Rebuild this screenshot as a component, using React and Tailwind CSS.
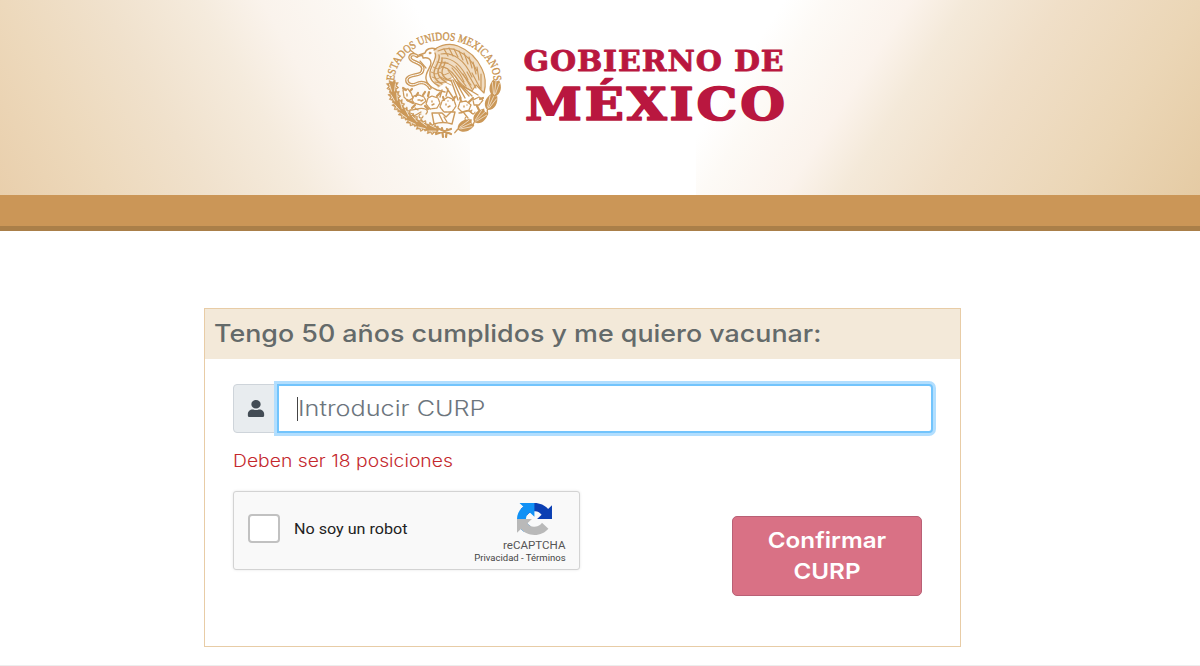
import { useState } from 'react';
import { FaUser } from 'react-icons/fa';

// leaves of the lower half of the wreath, angle in degrees (0 = right, 90 = bottom)
const OAK = [103, 115, 127, 139, 151, 163, 175];
const LAUREL = [7, 25, 46, 66];

const onWreath = (deg) => {
  const a = (deg * Math.PI) / 180;
  return `translate(${68 + 51.5 * Math.cos(a)} ${61 + 47 * Math.sin(a)})`;
};

const Emblem = () => (
  <svg className="h-[124px] w-[136px]" viewBox="0 0 136 124" fill="none" stroke="#cc9a5c" strokeLinecap="round" strokeLinejoin="round">
    <path id="motto" d="M18 61 A50 43 0 0 1 118 61" stroke="none" />
    <text fill="#c8934f" stroke="#c8934f" strokeWidth="0.35" fontSize="11.5" fontFamily="Liberation Serif, serif">
      <textPath href="#motto" startOffset="2" textLength="142" lengthAdjust="spacingAndGlyphs">ESTADOS UNIDOS MEXICANOS</textPath>
    </text>

    {/* eagle: wing */}
    <path d="M58 28c7-6 17-7 24-4 10 4 19 12 24 23 4 8 4 16 2 24l-8-8-4 6c-7-3-13-8-17-15L62 66l-8-14 6-14z" fill="#f0dcc2" stroke="none" />
    <g strokeWidth="1.2">
      <path d="M58 28c7-6 17-7 24-4 10 4 19 12 24 23 4 8 4 16 2 24l-8-8-4 6c-7-3-13-8-17-15" />
      <path d="M62 29c7-3 14-3 20 0 9 4 15 11 19 20M65 32c12-2 24 6 31 23M66 36c11 0 20 8 26 22M66 40c9 1 17 8 22 20M65 44c8 2 14 8 19 18" />
      <path d="M83 29l4 9M88 31l4 11M93 35l3 11M97 40l3 12M101 45l2 13M105 52l0 15M96 51l8 15M91 50l9 16M87 52l9 15M78 27l4 8M73 26l4 8M68 27l4 7" />
      <path d="M80 44l15 19M76 46l14 18M72 48l12 17" />
    </g>
    {/* eagle: head, breast and tail */}
    <g strokeWidth="1.4">
      <path d="M60 27c-5-2-10 0-11 4l-6 2c3 0 4 1 4 3 5-1 8 1 8 5 0 5-6 9-5 16 1 6 6 9 11 11l8 2" />
      <path d="M59 31c3 5-4 12-5 19s4 12 9 14M63 33c2 6-5 12-5 18s4 9 8 11M66 36c1 6-5 10-4 15s5 7 8 9M69 40c0 4-4 7-3 11s5 7 9 8" />
      <path d="M55 50l5 2 4-2 4 3 5-2M56 55l5 2 4-2 5 3 5-2M59 60l5 1 5-1 6 3M57 45l5 2 5-2 5 2M61 40l5 1 6 0" strokeWidth="0.9" />
      <path d="M75 58l7 20M79 58l10 18M83 61l13 13M87 64l15 9M77 58l8 18M81 60l12 14M70 65l8 12M66 68l-2 7M72 67l-2 7" />
    </g>
    <circle cx="54" cy="31" r="0.9" fill="#c8934f" />
    {/* snake */}
    <path d="M41 34c-6-4-10 2-4 5 7 3 12 5 9 11-2 4-13 2-15 7-1 5 5 7 9 5 6-3 11-1 14 4" strokeWidth="3.6" />
    <path d="M41 34c-6-4-10 2-4 5 7 3 12 5 9 11-2 4-13 2-15 7-1 5 5 7 9 5 6-3 11-1 14 4" stroke="#fff" strokeWidth="1" />
    <path d="M38 31l-4-3M47 33l-6 2M50 46l-6-7" strokeWidth="1.2" />

    {/* cactus */}
    <g strokeWidth="1.3" strokeDasharray="3 1" fill="#fffdfb">
      <path d="M27 68l5-1 3 4 2 5-5 3-4-4z" />
      <path d="M38 74l5-1 5 2 2 4-5 4-7-2-2-3z" />
      <path d="M52 76l4-2 6 2 2 5-3 5-7 1-4-5z" />
      <path d="M84 80l6-1 5 4-2 5-7 2-4-4z" />
      <path d="M97 78l6-3 4 3-4 5-5 0z" />
      <path d="M66 79l6-4 6 3 2 6-4 6-8 0-4-5z" />
    </g>
    <path d="M56 91h10l4 4 5-5h4l-3 12c-6-2-12-2-18 0z" strokeWidth="1.4" fill="#fffdfb" />
    <g strokeWidth="1.1">
      <path d="M27 66l3 2M36 67l-2 2M31 78l6 3M40 74l2-3M47 73l2-3M52 74l1-4M61 74l3-3M68 78l-1-3M77 78l2-3M85 79l-1-3M93 80l4-4M104 77l3-1M101 84l2 4M39 83l-3 3M49 84l3 3" strokeWidth="2.2" />
      <path d="M31 72v2M42 78h2M47 78l-2 1M56 79v1M58 82l-2 1M70 82v1M74 84l-2 1M72 79v0M88 84v1M91 83v0" strokeWidth="1.4" />
      <path d="M34 88c6 0 10-3 15-1 3 1 3 3 1 5M38 94l7-4M42 88l-3-2M37 92l-3-1M83 91c5 0 7-3 12-2M88 91l4 5M93 89l4 3M63 92l4 8M68 95l3 5" strokeWidth="1.3" />
      <path d="M96 88a2 2 0 1 0 3 2M90 95a2 2 0 1 0 3 2M45 92a2 2 0 1 0 2 2" />
    </g>

    {/* wreath: oak on the left, laurel on the right */}
    {OAK.map(deg => (
      <g key={deg} transform={`${onWreath(deg)} rotate(${deg + 90})`}>
        <path d="M-6-1L-5-4-3-3-1-6 1-4 4-6 4-3 7-3 5 0 7 3 4 3 4 6 1 4-1 6-3 3-5 4-6 1z" fill="#cb9858" strokeWidth="0.6" />
        <path d="M-4-1.5L3-3M-4 1.5l7 1.5M-1-4l1 1M-1 4l1-1" stroke="#fdf8f2" strokeWidth="0.7" />
      </g>
    ))}
    {LAUREL.map(deg => (
      <g key={deg} transform={`${onWreath(deg)} rotate(${deg - 90})`}>
        <path d="M-8 0C-5-7 3-7 9-3 7-1 7 1 9 3 3 7-5 7-8 0z" fill="#cb9858" stroke="none" />
        <path d="M-5-1L6-3.5M-5 1L6 3.5M-6 0h13" stroke="#fdf8f2" strokeWidth="0.6" />
        <path d="M-8 0l-4 2" strokeWidth="1.4" />
      </g>
    ))}
    <path d="M60 112l15-5M61 106l14 6M66 106l1 9M71 107l-1 8" strokeWidth="2.2" />
  </svg>
);

const GobiernoLogo = () => (
  <svg className="mt-[13px] h-[100px] w-[290px]" viewBox="510 35 290 100" fill="#b9173f" stroke="#b9173f" strokeLinejoin="round" fontFamily="DejaVu Serif, serif" fontWeight="700">
    <text x="523.5" y="70.5" fontSize="27.5" strokeWidth="0.8" letterSpacing="0.8" textLength="261" lengthAdjust="spacingAndGlyphs">GOBIERNO DE</text>
    <text x="525" y="119.5" fontSize="44" strokeWidth="1.7" letterSpacing="2.5" textLength="263" lengthAdjust="spacingAndGlyphs">MÉXICO</text>
  </svg>
);

const RecaptchaLogo = () => (
  <svg className="h-8 w-[35px]" viewBox="0 0 64 64" preserveAspectRatio="none">
    <path fill="#0b3fb3" d="M64 31.955l-.033-1.37V4.687l-7.16 7.16C50.948 4.674 42.033.093 32.05.093c-10.4 0-19.622 4.96-25.458 12.64l11.736 11.86a15.55 15.55 0 0 1 4.754-5.334c2.05-1.6 4.952-2.906 8.968-2.906.485 0 .86.057 1.135.163 4.976.393 9.288 3.14 11.828 7.124l-8.307 8.307L64 31.953" />
    <path fill="#1191f5" d="M31.862.094l-1.37.033H4.594l7.16 7.16C4.58 13.147 0 22.06 0 32.046c0 10.4 4.96 19.622 12.64 25.458L24.5 45.768a15.55 15.55 0 0 1-5.334-4.754c-1.6-2.05-2.906-4.952-2.906-8.968 0-.485.057-.86.163-1.135.393-4.976 3.14-9.288 7.124-11.828l8.307 8.307L31.86.095" />
    <path fill="#b9b9b9" d="M.001 32.045l.033 1.37v25.898l7.16-7.16c5.86 7.173 14.774 11.754 24.76 11.754 10.4 0 19.622-4.96 25.458-12.64l-11.736-11.86a15.55 15.55 0 0 1-4.754 5.334c-2.05 1.6-4.952 2.906-8.968 2.906-.485 0-.86-.057-1.135-.163-4.976-.393-9.288-3.14-11.828-7.124l8.307-8.307c-10.522.04-22.4.066-27.295-.005" />
  </svg>
);

export default function App() {
  const [curp, setCurp] = useState('');
  const [checked, setChecked] = useState(false);

  return (
    <div className="flex h-[666px] w-[1200px] flex-col overflow-hidden border-b border-[#ededed] bg-white font-['Inter',sans-serif]">
      <header className="flex h-[195px] shrink-0 bg-[linear-gradient(61deg,#e9cfac_0%,#edd9bc_19%,#f0e1cc_36%,#f5ebdd_53%,#faf3ec_64%,#fcf9f5_80%,#ffffff_90%),linear-gradient(123deg,#ffffff_14%,#fdfaf6_21%,#fbf3ec_34%,#f4e9d9_43%,#f0dfc8_58%,#ebd6b6_80%,#e5cba4_100%)] bg-[length:470px_195px,504px_195px] bg-[position:left_top,right_top] bg-no-repeat">
        <div className="flex items-start pl-[376px] pt-[22px]">
          <Emblem />
          <div className="-ml-0.5">
            <GobiernoLogo />
          </div>
        </div>
      </header>
      <div className="h-9 shrink-0 border-b-[5px] border-[#aa7f49] bg-[#cb9657]" />

      <main className="ml-[204px] mt-[77px] h-[339px] w-[757px] border border-[#e8cca6]">
        <div className="flex h-[50px] items-center bg-[#f3e9d9] pl-[9px]">
          <h1 className="origin-left scale-x-[1.118] whitespace-nowrap text-2xl font-medium text-[#646a6a]">
            Tengo 50 años cumplidos y me quiero vacunar:
          </h1>
        </div>

        <form className="pl-7 pr-[27px] pt-[25px]" onSubmit={(e) => e.preventDefault()}>
          <div className="flex h-[49px]">
            <span className="flex w-11 items-center justify-center rounded-l border border-[#ced4da] bg-[#e8ecef] pl-0.5">
              <FaUser className="h-[17px] w-4 scale-x-110 text-[#434c55]" />
            </span>
            <div className="flex flex-1 items-center rounded-r border-2 border-[#72c4fc] bg-white pl-[18px] shadow-[0_0_0_3px_#b2defe]">
              <span className="h-6 w-px bg-[#444]" />
              <input
                type="text"
                value={curp}
                onChange={(e) => setCurp(e.target.value)}
                placeholder="Introducir CURP"
                className="w-[500px] origin-left scale-x-[1.2] text-[21px] font-light text-[#495057] outline-none placeholder:text-[#6c757d]"
              />
            </div>
          </div>

          <p className="mt-4 w-fit origin-left scale-x-[1.136] text-[17px] font-light leading-6 text-[#c4282d]">Deben ser 18 posiciones</p>

          <div className="flex items-start justify-between">
            <div className="mt-[18px] flex h-[79px] w-[347px] rounded-[3px] border border-[#d3d3d3] bg-[#f9f9f9] font-['Roboto',sans-serif] shadow-[0_0_3px_rgba(0,0,0,0.1)]">
              <button
                type="button"
                onClick={() => setChecked(!checked)}
                className="ml-3.5 mt-[22px] h-[29px] w-8 rounded-sm border-2 border-[#c1c1c1] bg-white"
              >
                {checked && '✓'}
              </button>
              <span className="ml-3.5 mt-[25px] origin-left scale-x-[1.075] text-[15px] leading-6 text-[#222]">No soy un robot</span>
              <div className="ml-auto mr-[13px] mt-[11px] flex flex-col items-end">
                <div className="mr-3.5">
                  <RecaptchaLogo />
                </div>
                <span className="mr-px mt-1 origin-right scale-x-[1.05] text-[11px] leading-[14px] text-[#555]">reCAPTCHA</span>
                <span className="origin-right scale-x-[1.12] text-[8.5px] leading-[11px] text-[#444]">Privacidad - Términos</span>
              </div>
            </div>

            <button
              type="submit"
              className="mr-[11px] mt-[43px] h-20 w-[190px] rounded-[5px] border border-[#b96075] bg-[#d97185] text-[22px] font-semibold leading-[31px] text-white"
            >
              <span className="block scale-x-[1.1]">
                Confirmar
                <br />
                CURP
              </span>
            </button>
          </div>
        </form>
      </main>
    </div>
  );
}
